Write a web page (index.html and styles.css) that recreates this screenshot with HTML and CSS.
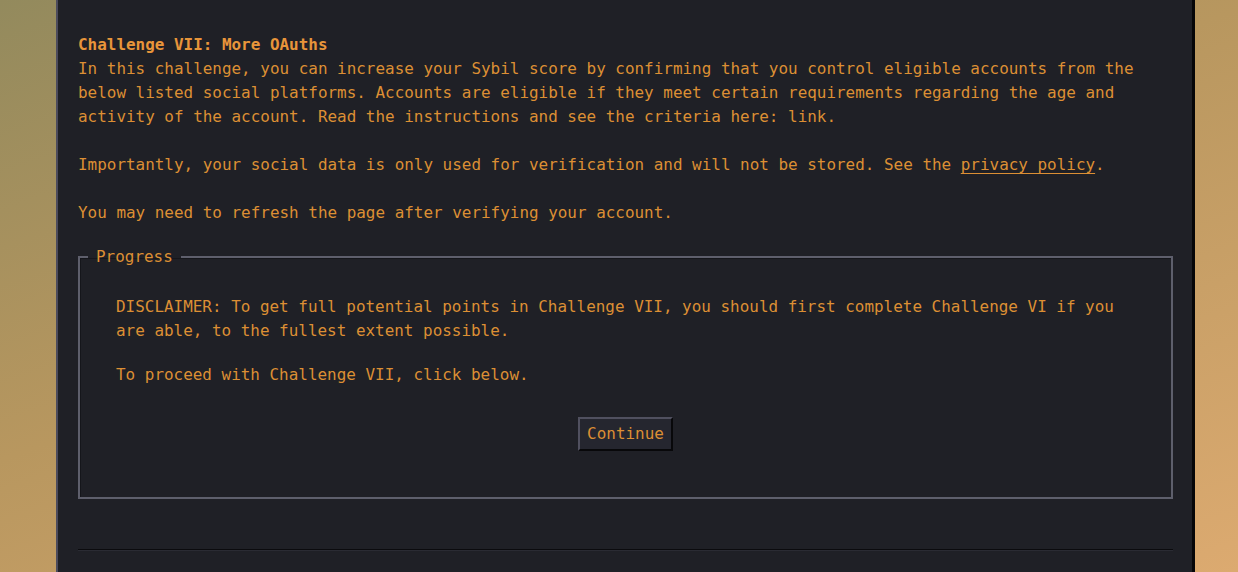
FILE: index.html
```html
<!DOCTYPE html>
<html lang="en">
<head>
<meta charset="utf-8">
<title>Challenge VII: More OAuths</title>
<link rel="stylesheet" href="styles.css">
</head>
<body>
<div class="page">
  <main class="panel">
    <h2 class="title">Challenge VII: More OAuths</h2>
    <p class="para">In this challenge, you can increase your Sybil score by confirming that you control eligible accounts from the below listed social platforms. Accounts are eligible if they meet certain requirements regarding the age and activity of the account. Read the instructions and see the criteria here: link.</p>
    <p class="para">Importantly, your social data is only used for verification and will not be stored. See the <a class="link" href="#">privacy policy</a>.</p>
    <p class="para">You may need to refresh the page after verifying your account.</p>
    <fieldset class="progress">
      <legend class="legend">Progress</legend>
      <p class="note">DISCLAIMER: To get full potential points in Challenge VII, you should first complete Challenge VI if you are able, to the fullest extent possible.</p>
      <p class="note gap">To proceed with Challenge VII, click below.</p>
      <div class="actions">
        <button class="btn" type="button">Continue</button>
      </div>
    </fieldset>
    <hr class="rule">
  </main>
</div>
</body>
</html>
```
FILE: styles.css
```css
html, body {
  margin: 0;
  padding: 0;
  height: 100%;
}
body {
  background: linear-gradient(160deg, #938a5d 0%, #b8975f 45%, #dcaa70 100%);
  font-family: "DejaVu Sans Mono", "Liberation Mono", monospace;
  font-size: 15.95px;
  line-height: 24px;
  color: #dc8f34;
  overflow: hidden;
}
.page {
  display: flex;
  height: 572px;
}
.panel {
  box-sizing: border-box;
  margin-left: 56px;
  width: 1139px;
  padding: 33px 19px 0 20px;
  background: #1f2026;
  border-left: 2px solid #4c4b5c;
  border-right: 3px solid #060608;
  display: flex;
  flex-direction: column;
}
.title {
  margin: 0;
  font-size: 15.95px;
  line-height: 24px;
  font-weight: bold;
  color: #e8953a;
}
.para {
  margin: 0 0 24px 0;
}
.para:last-of-type {
  margin-bottom: 20px;
}
.link {
  color: inherit;
  text-decoration: underline;
  text-underline-offset: 3px;
}
.progress {
  margin: 0;
  padding: 26px 36px 46px 36px;
  border: 2px solid #5e5f6c;
  box-shadow: inset 1px 1px 0 #15161b;
  min-width: 0;
}
.legend {
  padding: 0 8px;
  margin-left: -28px;
  line-height: 24px;
}
.note {
  margin: 0;
}
.note.gap {
  margin-top: 20px;
}
.actions {
  display: flex;
  justify-content: center;
  margin-top: 30px;
}
.btn {
  font-family: inherit;
  font-size: 15.95px;
  line-height: 24px;
  color: #dc8f34;
  background: #25262f;
  padding: 3px 7px;
  border-style: solid;
  border-width: 2px;
  border-color: #50505f #08080a #08080a #50505f;
  cursor: pointer;
}
.rule {
  margin: 50px 0 0 0;
  border: 0;
  border-top: 1px solid #0b0b0e;
  border-bottom: 1px solid #2a2b33;
  height: 0;
}
```
